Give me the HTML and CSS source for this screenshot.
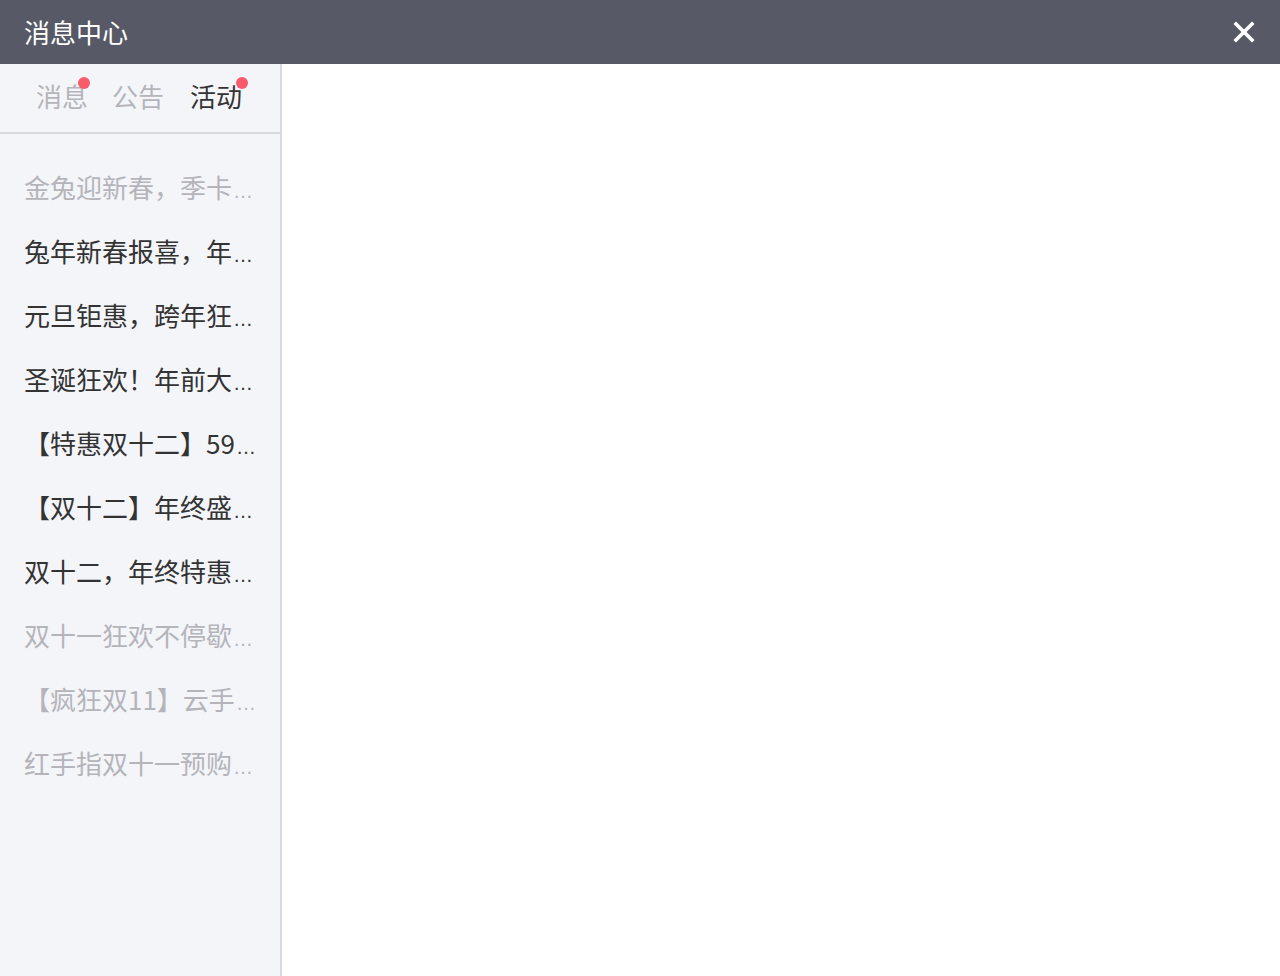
FILE: index.html
```html
<!DOCTYPE html>
<html lang="zh-CN">
<head>
<meta charset="utf-8">
<title>消息中心</title>
<link rel="stylesheet" href="styles.css">
</head>
<body>
<div class="window">
  <header class="titlebar">
    <span class="title">消息中心</span>
    <button class="close" aria-label="关闭">
      <svg width="22" height="22" viewBox="0 0 22 22"><path d="M3 3L19 19M19 3L3 19" stroke="#ffffff" stroke-width="3.6" stroke-linecap="square"/></svg>
    </button>
  </header>
  <div class="main">
    <aside class="sidebar">
      <nav class="tabs">
        <span class="tab">消息<i class="dot"></i></span>
        <span class="tab">公告</span>
        <span class="tab active">活动<i class="dot dot-wide"></i></span>
      </nav>
      <ul class="list">
        <li class="item read">金兔迎新春，季卡<span class="more">…</span></li>
        <li class="item">兔年新春报喜，年<span class="more">…</span></li>
        <li class="item">元旦钜惠，跨年狂<span class="more">…</span></li>
        <li class="item">圣诞狂欢！年前大<span class="more">…</span></li>
        <li class="item">【特惠双十二】59<span class="more">…</span></li>
        <li class="item">【双十二】年终盛<span class="more">…</span></li>
        <li class="item">双十二，年终特惠<span class="more">…</span></li>
        <li class="item read">双十一狂欢不停歇<span class="more">…</span></li>
        <li class="item read">【疯狂双11】云手<span class="more">…</span></li>
        <li class="item read">红手指双十一预购<span class="more">…</span></li>
      </ul>
    </aside>
    <section class="content"></section>
  </div>
</div>
</body>
</html>
```

FILE: styles.css
```css
* { box-sizing: border-box; }
html, body { margin: 0; padding: 0; height: 100%; }
body {
  font-family: "Noto Sans CJK SC", "Noto Sans", sans-serif;
  background: #ffffff;
  width: 1280px;
  height: 976px;
  overflow: hidden;
}
.window {
  display: flex;
  flex-direction: column;
  height: 976px;
}
.titlebar {
  height: 64px;
  flex: 0 0 64px;
  background: #575a66;
  display: flex;
  align-items: center;
  justify-content: space-between;
  padding: 0 25px 0 24px;
}
.title {
  color: #ffffff;
  font-size: 26px;
  line-height: 1;
}
.close {
  border: 0;
  background: transparent;
  padding: 0;
  width: 22px;
  height: 22px;
  display: flex;
  cursor: pointer;
}
.main {
  flex: 1;
  display: flex;
  min-height: 0;
}
.sidebar {
  width: 282px;
  flex: 0 0 282px;
  background: #f4f5f9;
  border-right: 2px solid #d9dadf;
  display: flex;
  flex-direction: column;
}
.tabs {
  height: 70px;
  flex: 0 0 70px;
  border-bottom: 2px solid #d9dadf;
  display: flex;
  justify-content: center;
  align-items: center;
  gap: 24px;
  padding: 0 2px 4px 0;
}
.tab {
  position: relative;
  font-size: 26px;
  color: #b4b4ba;
  line-height: 1;
}
.tab.active { color: #333333; margin-left: 2px; }
.dot {
  position: absolute;
  top: -6px;
  right: -2px;
  width: 12px;
  height: 12px;
  border-radius: 50%;
  background: #f85c6a;
}
.dot-wide { right: -6px; }
.list {
  list-style: none;
  margin: 0;
  padding: 17px 0 0 0;
}
.item {
  height: 64px;
  display: flex;
  align-items: baseline;
  padding: 17px 0 0 24px;
  font-size: 26px;
  color: #333333;
  white-space: nowrap;
  overflow: hidden;
}
.item.read { color: #b4b4ba; }
.more {
  font-family: "Liberation Sans", Arial, sans-serif;
  font-size: 20px;
  margin-left: 1px;
}
.content {
  flex: 1;
  background: #ffffff;
}
```
